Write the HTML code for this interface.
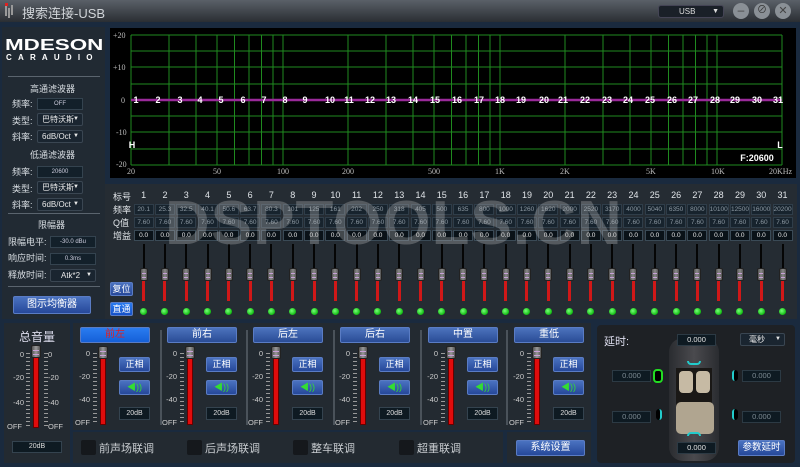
<!DOCTYPE html>
<html><head><meta charset="utf-8"><style>
*{margin:0;padding:0;box-sizing:border-box}
body{width:800px;height:467px;overflow:hidden;background:#1a2a3e;font-family:"Liberation Sans","Noto Sans CJK SC",sans-serif;color:#dde;position:relative}
.a{position:absolute}
.t{font-size:9px;color:#d8dde2}
.box{position:absolute;background:#13202a;border:1px solid #34434f;color:#ccd;font-size:7px;text-align:center;line-height:10px;height:12px}
.dd{position:absolute;background:#1a2530;border:1px solid #3a4652;color:#e8e8e8;font-size:8px;line-height:11px;height:13px;padding-left:4px;border-radius:2px}
.dd:after{content:"▼";position:absolute;right:3px;font-size:6px}
.btn{position:absolute;background:linear-gradient(#4a72c0,#26489a);border:1px solid #5a7cc4;color:#fff;font-size:10px;text-align:center;border-radius:2px}
.row{position:absolute;left:133px;width:660px;display:flex}
.row div{flex:1;display:flex;justify-content:center}
.row span{display:block;width:20px;height:11px;background:#17232d;border:1px solid #2f3d49;font-size:6.5px;color:#8c98a2;text-align:center;line-height:9px}
.row.g span{background:#0a1218;color:#e6e6e6;border-color:#3a4a56}
.hd{font-size:9px;color:#e0e4e8}
.sl{position:absolute;left:133px;top:244px;width:660px;display:flex;height:74px}
.sl div{flex:1;position:relative}
.sl div:before{content:"";position:absolute;left:50%;margin-left:-1px;top:0;width:2px;height:37px;background:#050505}
.sl div:after{content:"";position:absolute;left:50%;margin-left:-1.5px;top:37px;width:3px;height:20px;background:#d01818}
.sl i{position:absolute;left:50%;margin-left:-4px;top:24px;width:8px;height:13px;background:linear-gradient(90deg,#555,#8a8a8a,#555);border:1px solid #222;border-radius:2px;z-index:2}
.sl i:before{content:"";position:absolute;left:1px;right:1px;top:4px;height:3px;border-top:1px solid #c8a0d8;border-bottom:1px solid #c8a0d8}
.sl b{position:absolute;left:50%;margin-left:-3.5px;top:64px;width:7px;height:7px;border-radius:50%;background:radial-gradient(circle at 40% 40%,#7f7,#1b1 70%)}
.fd{position:absolute;width:6px;background:#e00c0c;border:1px solid #600}
.th{position:absolute;width:10px;height:13px;background:linear-gradient(90deg,#555,#999,#555);border:1px solid #222;border-radius:2px}
.th:before{content:"";position:absolute;left:1px;right:1px;top:4px;height:3px;border-top:1px solid #c8a0d8;border-bottom:1px solid #c8a0d8}
.sc{position:absolute;font-size:7.5px;color:#ccc;text-align:right;width:20px}
.tk{position:absolute;width:4px;border-left:0;background:repeating-linear-gradient(#999 0 1px,transparent 1px 4px)}
.ch{position:absolute;top:327px;width:70px;height:16px;background:linear-gradient(#4c73bd,#2a4c96);border:1px solid #5a7cc4;color:#fff;font-size:10px;text-align:center;line-height:14px;border-radius:2px}
.cb{position:absolute;top:440px;width:15px;height:15px;background:#15181c;border-radius:2px}
.cl{position:absolute;top:440px;font-size:11px;color:#c8ccd0}
.dl{position:absolute;background:#0e1a22;border:1px solid #2c3a44;color:#7d8a92;font-size:7.5px;text-align:center;line-height:10px;height:12px;width:39px}
</style></head><body>
<div class="a" style="left:0;top:0;width:800px;height:22px;background:linear-gradient(#5a6068,#2a2e33)"></div>
<div class="a" style="left:5px;top:6px;width:2px;height:10px;background:#999;box-shadow:3px 2px 0 #999,6px -1px 0 #999"></div>
<div class="a" style="left:5px;top:3px;width:3px;height:3px;background:#d22"></div>
<div class="a" style="left:22px;top:3px;font-size:13px;color:#d0d4d8">搜索连接-USB</div>
<div class="a" style="left:658px;top:5px;width:66px;height:13px;background:#1a2028;border:1px solid #445;border-radius:3px;font-size:8px;color:#ddd;line-height:11px;padding-left:20px">USB<span style="position:absolute;right:4px;font-size:7px">▼</span></div>
<div class="a" style="left:733px;top:3px;width:16px;height:16px;border-radius:50%;background:#8a9096;color:#444;font-size:12px;line-height:15px;text-align:center">–</div>
<div class="a" style="left:754px;top:3px;width:16px;height:16px;border-radius:50%;background:#8a9096;color:#333;font-size:10px;line-height:16px;text-align:center">⊘</div>
<div class="a" style="left:775px;top:3px;width:16px;height:16px;border-radius:50%;background:#8a9096;color:#444;font-size:11px;line-height:16px;text-align:center">✕</div>

<div class="a" style="left:2px;top:27px;width:103px;height:292px;background:#212a33"></div>
<div class="a" style="left:5px;top:37px;font-size:16px;font-weight:bold;color:#fff;font-family:'Liberation Sans',sans-serif;transform:scaleX(1.4);transform-origin:left">MDESON</div>
<div class="a" style="left:6px;top:53px;font-size:8px;font-weight:bold;color:#fff;letter-spacing:6.2px">CARAUDIO</div>
<div class="a" style="left:8px;top:76px;width:92px;height:1px;background:#5a646e"></div>
<div class="a t" style="left:30px;top:82px">高通滤波器</div>
<div class="a t" style="left:12px;top:97px">频率:</div><div class="box" style="left:37px;top:98px;width:46px;font-size:6px">OFF</div>
<div class="a t" style="left:12px;top:114px">类型:</div><div class="dd" style="left:37px;top:113px;width:46px">巴特沃斯</div>
<div class="a t" style="left:12px;top:130px">斜率:</div><div class="dd" style="left:37px;top:130px;width:46px">6dB/Oct</div>
<div class="a t" style="left:30px;top:148px">低通滤波器</div>
<div class="a t" style="left:12px;top:165px">频率:</div><div class="box" style="left:37px;top:166px;width:46px;font-size:6px">20600</div>
<div class="a t" style="left:12px;top:182px">类型:</div><div class="dd" style="left:37px;top:181px;width:46px">巴特沃斯</div>
<div class="a t" style="left:12px;top:198px">斜率:</div><div class="dd" style="left:37px;top:198px;width:46px">6dB/Oct</div>
<div class="a" style="left:8px;top:213px;width:92px;height:1px;background:#5a646e"></div>
<div class="a t" style="left:38px;top:218px">限幅器</div>
<div class="a t" style="left:8px;top:235px">限幅电平:</div><div class="box" style="left:50px;top:236px;width:46px;font-size:6px">-30.0 dBu</div>
<div class="a t" style="left:8px;top:251px">响应时间:</div><div class="box" style="left:50px;top:253px;width:46px;font-size:6px">0.3ms</div>
<div class="a t" style="left:8px;top:268px">释放时间:</div><div class="dd" style="left:50px;top:269px;width:46px;padding-left:10px">Atk*2</div>
<div class="a" style="left:8px;top:286px;width:92px;height:1px;background:#5a646e"></div>
<div class="btn" style="left:13px;top:296px;width:78px;height:18px;line-height:16px">图示均衡器</div>

<svg class="a" style="left:0;top:0" width="800" height="180">
<rect x="110" y="28" width="686" height="150" fill="#000"/>
<g stroke="#1f8a1f" stroke-width="1">
<line x1="131" y1="35" x2="782" y2="35"/><line x1="131" y1="51" x2="782" y2="51"/><line x1="131" y1="67" x2="782" y2="67"/><line x1="131" y1="84" x2="782" y2="84"/><line x1="131" y1="116" x2="782" y2="116"/><line x1="131" y1="132" x2="782" y2="132"/><line x1="131" y1="149" x2="782" y2="149"/><line x1="131" y1="165" x2="782" y2="165"/>
<path d="M131 35V165M169 35V165M196 35V165M217 35V165M234.5 35V165M249 35V165M261.5 35V165M273 35V165M283 35V165M348 35V165M386 35V165M413 35V165M434 35V165M451.5 35V165M466 35V165M478.5 35V165M490 35V165M500 35V165M565 35V165M603 35V165M630 35V165M651 35V165M668.5 35V165M683 35V165M695.5 35V165M707 35V165M717 35V165M782 35V165"/>
</g>
<line x1="131" y1="100" x2="782" y2="100" stroke="#9a2a9a" stroke-width="2.5"/>
<g font-family="Liberation Serif,serif" font-size="8" fill="#bbb">
<text x="113" y="38">+20</text><text x="113" y="70">+10</text><text x="121" y="103">0</text><text x="116" y="135">-10</text><text x="116" y="167">-20</text>
<text x="127" y="174">20</text><text x="213" y="174">50</text><text x="277" y="174">100</text><text x="342" y="174">200</text><text x="428" y="174">500</text><text x="495" y="174">1K</text><text x="560" y="174">2K</text><text x="646" y="174">5K</text><text x="711" y="174">10K</text><text x="769" y="174">20KHz</text>
</g>
<g font-family="Liberation Sans,sans-serif" font-size="9" font-weight="bold" fill="#fff" text-anchor="middle">
<text x="136" y="103">1</text><text x="158" y="103">2</text><text x="180" y="103">3</text><text x="200" y="103">4</text><text x="221" y="103">5</text><text x="243" y="103">6</text><text x="264" y="103">7</text><text x="285" y="103">8</text><text x="305" y="103">9</text><text x="330" y="103">10</text><text x="349" y="103">11</text><text x="370" y="103">12</text><text x="391" y="103">13</text><text x="413" y="103">14</text><text x="435" y="103">15</text><text x="457" y="103">16</text><text x="479" y="103">17</text><text x="500" y="103">18</text><text x="521" y="103">19</text><text x="544" y="103">20</text><text x="563" y="103">21</text><text x="585" y="103">22</text><text x="607" y="103">23</text><text x="628" y="103">24</text><text x="650" y="103">25</text><text x="672" y="103">26</text><text x="693" y="103">27</text><text x="715" y="103">28</text><text x="735" y="103">29</text><text x="757" y="103">30</text><text x="778" y="103">31</text>
<text x="132" y="148">H</text><text x="780" y="148">L</text>
<text x="757" y="161" font-size="9">F:20600</text>
</g>
</svg>

<div class="a" style="left:105px;top:184px;width:692px;height:135px;background:#252c33"></div>
<div class="a hd" style="left:113px;top:190px">标号</div>
<div class="a hd" style="left:113px;top:203px">频率</div>
<div class="a hd" style="left:113px;top:216px">Q值</div>
<div class="a hd" style="left:113px;top:229px">增益</div>
<div class="row hd" style="top:190px"><div>1</div><div>2</div><div>3</div><div>4</div><div>5</div><div>6</div><div>7</div><div>8</div><div>9</div><div>10</div><div>11</div><div>12</div><div>13</div><div>14</div><div>15</div><div>16</div><div>17</div><div>18</div><div>19</div><div>20</div><div>21</div><div>22</div><div>23</div><div>24</div><div>25</div><div>26</div><div>27</div><div>28</div><div>29</div><div>30</div><div>31</div></div>
<div class="row" style="top:204px"><div><span>20.1</span></div><div><span>25.3</span></div><div><span>32.5</span></div><div><span>40.1</span></div><div><span>50.6</span></div><div><span>63.7</span></div><div><span>80.3</span></div><div><span>101</span></div><div><span>125</span></div><div><span>161</span></div><div><span>202</span></div><div><span>250</span></div><div><span>318</span></div><div><span>405</span></div><div><span>500</span></div><div><span>635</span></div><div><span>800</span></div><div><span>1000</span></div><div><span>1260</span></div><div><span>1620</span></div><div><span>2000</span></div><div><span>2520</span></div><div><span>3170</span></div><div><span>4000</span></div><div><span>5040</span></div><div><span>6350</span></div><div><span>8000</span></div><div><span>10100</span></div><div><span>12500</span></div><div><span>16000</span></div><div><span>20200</span></div></div>
<div class="row" style="top:217px"><div><span>7.60</span></div><div><span>7.60</span></div><div><span>7.60</span></div><div><span>7.60</span></div><div><span>7.60</span></div><div><span>7.60</span></div><div><span>7.60</span></div><div><span>7.60</span></div><div><span>7.60</span></div><div><span>7.60</span></div><div><span>7.60</span></div><div><span>7.60</span></div><div><span>7.60</span></div><div><span>7.60</span></div><div><span>7.60</span></div><div><span>7.60</span></div><div><span>7.60</span></div><div><span>7.60</span></div><div><span>7.60</span></div><div><span>7.60</span></div><div><span>7.60</span></div><div><span>7.60</span></div><div><span>7.60</span></div><div><span>7.60</span></div><div><span>7.60</span></div><div><span>7.60</span></div><div><span>7.60</span></div><div><span>7.60</span></div><div><span>7.60</span></div><div><span>7.60</span></div><div><span>7.60</span></div></div>
<div class="row g" style="top:230px"><div><span>0.0</span></div><div><span>0.0</span></div><div><span>0.0</span></div><div><span>0.0</span></div><div><span>0.0</span></div><div><span>0.0</span></div><div><span>0.0</span></div><div><span>0.0</span></div><div><span>0.0</span></div><div><span>0.0</span></div><div><span>0.0</span></div><div><span>0.0</span></div><div><span>0.0</span></div><div><span>0.0</span></div><div><span>0.0</span></div><div><span>0.0</span></div><div><span>0.0</span></div><div><span>0.0</span></div><div><span>0.0</span></div><div><span>0.0</span></div><div><span>0.0</span></div><div><span>0.0</span></div><div><span>0.0</span></div><div><span>0.0</span></div><div><span>0.0</span></div><div><span>0.0</span></div><div><span>0.0</span></div><div><span>0.0</span></div><div><span>0.0</span></div><div><span>0.0</span></div><div><span>0.0</span></div></div>
<div class="sl"><div><i></i><b></b></div><div><i></i><b></b></div><div><i></i><b></b></div><div><i></i><b></b></div><div><i></i><b></b></div><div><i></i><b></b></div><div><i></i><b></b></div><div><i></i><b></b></div><div><i></i><b></b></div><div><i></i><b></b></div><div><i></i><b></b></div><div><i></i><b></b></div><div><i></i><b></b></div><div><i></i><b></b></div><div><i></i><b></b></div><div><i></i><b></b></div><div><i></i><b></b></div><div><i></i><b></b></div><div><i></i><b></b></div><div><i></i><b></b></div><div><i></i><b></b></div><div><i></i><b></b></div><div><i></i><b></b></div><div><i></i><b></b></div><div><i></i><b></b></div><div><i></i><b></b></div><div><i></i><b></b></div><div><i></i><b></b></div><div><i></i><b></b></div><div><i></i><b></b></div><div><i></i><b></b></div></div>
<div class="btn" style="left:110px;top:282px;width:23px;height:14px;font-size:9px;line-height:12px">复位</div>
<div class="btn" style="left:110px;top:302px;width:23px;height:14px;font-size:9px;line-height:12px;background:linear-gradient(#2a7cf0,#1550c8)">直通</div>
<div class="a" style="left:165px;top:188px;font-size:62px;font-weight:bold;color:rgba(200,200,200,0.3);letter-spacing:1px">DSPTOOLS.CN</div>

<div class="a" style="left:4px;top:323px;width:66px;height:140px;background:#232a31"></div>
<div class="a" style="left:19px;top:328px;font-size:12px;color:#dde">总音量</div>
<div class="sc" style="left:4px;top:350px">0</div><div class="sc" style="left:4px;top:373px">-20</div><div class="sc" style="left:4px;top:398px">-40</div><div class="sc" style="left:2px;top:422px">OFF</div>
<div class="a" style="left:48px;top:350px;font-size:7.5px;color:#ccc">0</div><div class="a" style="left:48px;top:373px;font-size:7.5px;color:#ccc">-20</div><div class="a" style="left:48px;top:398px;font-size:7.5px;color:#ccc">-40</div><div class="a" style="left:48px;top:422px;font-size:7.5px;color:#ccc">OFF</div>
<div class="tk" style="left:26px;top:353px;height:74px"></div><div class="tk" style="left:44px;top:353px;height:74px"></div>
<div class="fd" style="left:33px;top:352px;height:76px"></div><div class="th" style="left:31px;top:345px"></div>
<div class="box" style="left:12px;top:441px;width:50px;height:12px;font-size:7px;color:#ddd;background:#0e1a22">20dB</div>

<div class="a" style="left:73px;top:323px;width:518px;height:107px;background:#232a31"></div>
<div class="a" style="left:73px;top:432px;width:430px;height:31px;background:#232a31"></div>
<div class="a" style="left:507px;top:432px;width:84px;height:31px;background:#232a31"></div>

<div class="ch" style="left:80px;background:linear-gradient(#2a7cf0,#1560d8);color:#e02020">前左</div>
<div class="ch" style="left:167px">前右</div>
<div class="ch" style="left:253px">后左</div>
<div class="ch" style="left:340px">后右</div>
<div class="ch" style="left:428px">中置</div>
<div class="ch" style="left:514px">重低</div>
<div class="a" style="left:160px;top:330px;width:2px;height:95px;background:#4a525a"></div>
<div class="a" style="left:246px;top:330px;width:2px;height:95px;background:#4a525a"></div>
<div class="a" style="left:333px;top:330px;width:2px;height:95px;background:#4a525a"></div>
<div class="a" style="left:420px;top:330px;width:2px;height:95px;background:#4a525a"></div>
<div class="a" style="left:506px;top:330px;width:2px;height:95px;background:#4a525a"></div>

<div class="sc" style="left:70px;top:349px">0</div><div class="sc" style="left:70px;top:372px">-20</div><div class="sc" style="left:70px;top:395px">-40</div><div class="sc" style="left:70px;top:418px">OFF</div><div class="tk" style="left:93px;top:353px;height:70px"></div><div class="fd" style="left:100px;top:352px;height:73px"></div><div class="th" style="left:98px;top:346px"></div>
<div class="btn" style="left:119px;top:357px;width:31px;height:15px;font-size:9px;line-height:13px">正相</div><div class="btn" style="left:119px;top:380px;width:31px;height:15px;font-size:9px;line-height:13px;color:#3d3">◀))</div><div class="box" style="left:119px;top:407px;width:31px;height:13px;line-height:11px;color:#ddd;background:#0e1a22">20dB</div>

<div class="sc" style="left:157px;top:349px">0</div><div class="sc" style="left:157px;top:372px">-20</div><div class="sc" style="left:157px;top:395px">-40</div><div class="sc" style="left:157px;top:418px">OFF</div><div class="tk" style="left:180px;top:353px;height:70px"></div><div class="fd" style="left:187px;top:352px;height:73px"></div><div class="th" style="left:185px;top:346px"></div>
<div class="btn" style="left:206px;top:357px;width:31px;height:15px;font-size:9px;line-height:13px">正相</div><div class="btn" style="left:206px;top:380px;width:31px;height:15px;font-size:9px;line-height:13px;color:#3d3">◀))</div><div class="box" style="left:206px;top:407px;width:31px;height:13px;line-height:11px;color:#ddd;background:#0e1a22">20dB</div>

<div class="sc" style="left:243px;top:349px">0</div><div class="sc" style="left:243px;top:372px">-20</div><div class="sc" style="left:243px;top:395px">-40</div><div class="sc" style="left:243px;top:418px">OFF</div><div class="tk" style="left:266px;top:353px;height:70px"></div><div class="fd" style="left:273px;top:352px;height:73px"></div><div class="th" style="left:271px;top:346px"></div>
<div class="btn" style="left:292px;top:357px;width:31px;height:15px;font-size:9px;line-height:13px">正相</div><div class="btn" style="left:292px;top:380px;width:31px;height:15px;font-size:9px;line-height:13px;color:#3d3">◀))</div><div class="box" style="left:292px;top:407px;width:31px;height:13px;line-height:11px;color:#ddd;background:#0e1a22">20dB</div>

<div class="sc" style="left:330px;top:349px">0</div><div class="sc" style="left:330px;top:372px">-20</div><div class="sc" style="left:330px;top:395px">-40</div><div class="sc" style="left:330px;top:418px">OFF</div><div class="tk" style="left:353px;top:353px;height:70px"></div><div class="fd" style="left:360px;top:352px;height:73px"></div><div class="th" style="left:358px;top:346px"></div>
<div class="btn" style="left:379px;top:357px;width:31px;height:15px;font-size:9px;line-height:13px">正相</div><div class="btn" style="left:379px;top:380px;width:31px;height:15px;font-size:9px;line-height:13px;color:#3d3">◀))</div><div class="box" style="left:379px;top:407px;width:31px;height:13px;line-height:11px;color:#ddd;background:#0e1a22">20dB</div>

<div class="sc" style="left:418px;top:349px">0</div><div class="sc" style="left:418px;top:372px">-20</div><div class="sc" style="left:418px;top:395px">-40</div><div class="sc" style="left:418px;top:418px">OFF</div><div class="tk" style="left:441px;top:353px;height:70px"></div><div class="fd" style="left:448px;top:352px;height:73px"></div><div class="th" style="left:446px;top:346px"></div>
<div class="btn" style="left:467px;top:357px;width:31px;height:15px;font-size:9px;line-height:13px">正相</div><div class="btn" style="left:467px;top:380px;width:31px;height:15px;font-size:9px;line-height:13px;color:#3d3">◀))</div><div class="box" style="left:467px;top:407px;width:31px;height:13px;line-height:11px;color:#ddd;background:#0e1a22">20dB</div>

<div class="sc" style="left:504px;top:349px">0</div><div class="sc" style="left:504px;top:372px">-20</div><div class="sc" style="left:504px;top:395px">-40</div><div class="sc" style="left:504px;top:418px">OFF</div><div class="tk" style="left:527px;top:353px;height:70px"></div><div class="fd" style="left:534px;top:352px;height:73px"></div><div class="th" style="left:532px;top:346px"></div>
<div class="btn" style="left:553px;top:357px;width:31px;height:15px;font-size:9px;line-height:13px">正相</div><div class="btn" style="left:553px;top:380px;width:31px;height:15px;font-size:9px;line-height:13px;color:#3d3">◀))</div><div class="box" style="left:553px;top:407px;width:31px;height:13px;line-height:11px;color:#ddd;background:#0e1a22">20dB</div>

<div class="cb" style="left:81px"></div><div class="cl" style="left:99px">前声场联调</div>
<div class="cb" style="left:187px"></div><div class="cl" style="left:205px">后声场联调</div>
<div class="cb" style="left:293px"></div><div class="cl" style="left:311px">整车联调</div>
<div class="cb" style="left:399px"></div><div class="cl" style="left:417px">超重联调</div>
<div class="btn" style="left:516px;top:440px;width:69px;height:16px;line-height:14px">系统设置</div>

<div class="a" style="left:597px;top:325px;width:198px;height:138px;background:#1e2125;border-radius:4px"></div>
<div class="a" style="left:604px;top:333px;font-size:11px;color:#dde">延时:</div>
<div class="a" style="left:669px;top:338px;width:50px;height:123px;border-radius:14px;background:linear-gradient(90deg,#2a2c30,#4a4a4e,#2a2c30)"></div>
<div class="a" style="left:676px;top:368px;width:36px;height:40px;background:#1a1816"></div>
<div class="a" style="left:679px;top:371px;width:14px;height:22px;background:#c6baa4;border-radius:4px"></div>
<div class="a" style="left:696px;top:371px;width:14px;height:22px;background:#c6baa4;border-radius:4px"></div>
<div class="a" style="left:676px;top:402px;width:38px;height:32px;background:#b0a590;border-radius:5px"></div>
<div class="a" style="left:687px;top:361px;width:14px;height:4px;border:2px solid #2cc;border-top:0;border-radius:0 0 6px 6px"></div>
<div class="a" style="left:687px;top:432px;width:14px;height:4px;border:2px solid #2cc;border-bottom:0;border-radius:6px 6px 0 0"></div>
<div class="a" style="left:653px;top:369px;width:10px;height:14px;border:2px solid #2d2;border-radius:4px;background:#000"></div>
<div class="a" style="left:656px;top:409px;width:6px;height:11px;border-right:2px solid #2cc;background:#000;border-radius:3px"></div>
<div class="a" style="left:732px;top:370px;width:6px;height:11px;border-left:2px solid #2cc;background:#000;border-radius:3px"></div>
<div class="a" style="left:732px;top:409px;width:6px;height:11px;border-left:2px solid #2cc;background:#000;border-radius:3px"></div>
<div class="dl" style="left:677px;top:334px;color:#e0e0e0">0.000</div>
<div class="dl" style="left:612px;top:370px">0.000</div>
<div class="dl" style="left:742px;top:370px">0.000</div>
<div class="dl" style="left:612px;top:411px">0.000</div>
<div class="dl" style="left:742px;top:411px">0.000</div>
<div class="dl" style="left:677px;top:442px;color:#e0e0e0">0.000</div>
<div class="dd" style="left:740px;top:333px;width:45px;padding-left:8px">毫秒</div>
<div class="btn" style="left:738px;top:440px;width:47px;height:16px;line-height:14px;font-size:9.5px">参数延时</div>
</body></html>
